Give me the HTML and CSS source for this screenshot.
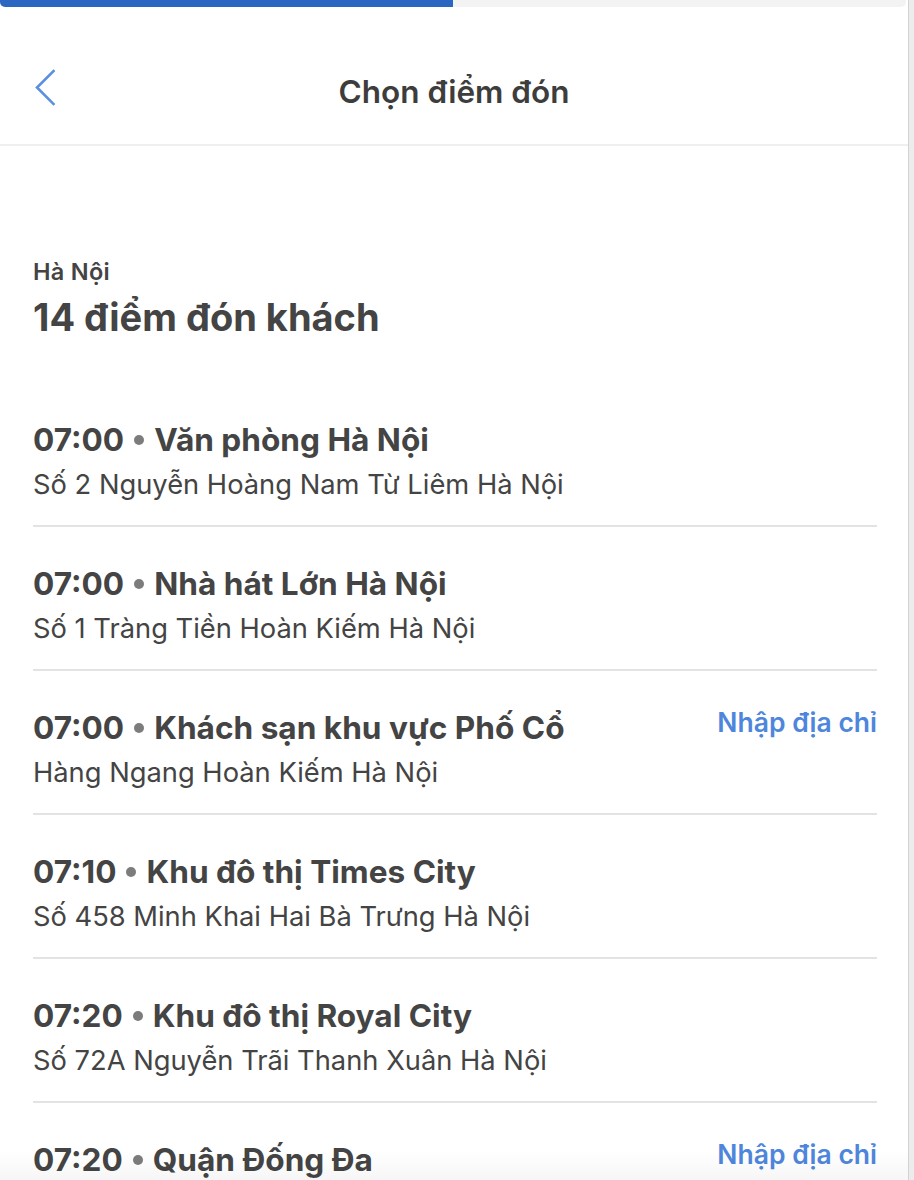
FILE: index.html
```html
<!DOCTYPE html>
<html lang="vi">
<head>
<meta charset="utf-8">
<title>Chọn điểm đón</title>
<link rel="stylesheet" href="styles.css">
</head>
<body>
<div class="frame">
  <div class="page">
    <div class="progress"><div class="progress-fill" style="width:50%"></div></div>
    <header class="topbar">
      <button class="back" aria-label="Quay lại">
        <svg width="24" height="38" viewBox="0 0 24 38"><polyline points="19.5,2 3,18.5 19.5,35" fill="none" stroke="#5b8fe1" stroke-width="2.6" stroke-linecap="square" stroke-linejoin="miter"/></svg>
      </button>
      <h1 class="title">Chọn điểm đón</h1>
    </header>
    <main class="content">
      <div class="city">Hà Nội</div>
      <div class="count">14 điểm đón khách</div>
      <ul class="list">
        <li class="item">
          <div class="row"><span class="name">07:00<i class="dot"></i>Văn phòng Hà Nội</span></div>
          <div class="addr">Số 2 Nguyễn Hoàng Nam Từ Liêm Hà Nội</div>
        </li>
        <li class="item">
          <div class="row"><span class="name">07:00<i class="dot"></i>Nhà hát Lớn Hà Nội</span></div>
          <div class="addr">Số 1 Tràng Tiền Hoàn Kiếm Hà Nội</div>
        </li>
        <li class="item">
          <div class="row"><span class="name">07:00<i class="dot"></i>Khách sạn khu vực Phố Cổ</span><a class="enter">Nhập địa chỉ</a></div>
          <div class="addr">Hàng Ngang Hoàn Kiếm Hà Nội</div>
        </li>
        <li class="item">
          <div class="row"><span class="name">07:10<i class="dot"></i>Khu đô thị Times City</span></div>
          <div class="addr">Số 458 Minh Khai Hai Bà Trưng Hà Nội</div>
        </li>
        <li class="item">
          <div class="row"><span class="name">07:20<i class="dot"></i>Khu đô thị Royal City</span></div>
          <div class="addr">Số 72A Nguyễn Trãi Thanh Xuân Hà Nội</div>
        </li>
        <li class="item">
          <div class="row"><span class="name">07:20<i class="dot"></i>Quận Đống Đa</span><a class="enter">Nhập địa chỉ</a></div>
          <div class="addr">Đống Đa Hà Nội</div>
        </li>
      </ul>
    </main>
    <div class="fade"></div>
  </div>
  <div class="scrollbar"></div>
</div>
</body>
</html>
```

FILE: styles.css
```css
html, body {
  margin: 0;
  padding: 0;
  height: 100%;
  overflow: hidden;
  background: #fff;
}
body {
  font-family: Inter, "Noto Sans", Roboto, sans-serif;
  color: #444;
}
.frame {
  display: flex;
  height: 1180px;
}
.page {
  position: relative;
  flex: 1;
  min-width: 0;
  overflow: hidden;
}
.scrollbar {
  width: 5px;
  border-left: 1px solid #d2d2d2;
  background: #ececec;
}
.progress {
  height: 7px;
  margin-right: 2px;
  background: #f3f3f3;
  border-radius: 0 0 5px 5px;
  overflow: hidden;
}
.progress-fill {
  height: 100%;
  background: #2c66c3;
}
.topbar {
  position: relative;
  height: 137px;
  border-bottom: 2px solid #efefef;
  display: flex;
  align-items: center;
  justify-content: center;
}
.back {
  position: absolute;
  left: 34px;
  top: 62px;
  padding: 0;
  border: 0;
  background: none;
  display: flex;
}
.title {
  margin: 0;
  font-size: 31.5px;
  font-weight: 600;
  color: #3d3d3d;
  letter-spacing: 0;
  padding-top: 32px;
  line-height: 40px;
}
.content {
  padding: 113px 31px 0 33px;
}
.city {
  font-size: 23.5px;
  font-weight: 600;
  line-height: 26px;
  color: #444;
  letter-spacing: 0.3px;
}
.count {
  margin-top: 10px;
  font-size: 38px;
  font-weight: 700;
  line-height: 44px;
  color: #444;
}
.list {
  list-style: none;
  margin: 44px 0 0;
  padding: 0;
}
.item {
  padding: 35px 0 22px;
  border-bottom: 2px solid #e3e3e3;
}
.row {
  display: flex;
  align-items: flex-start;
  justify-content: space-between;
}
.name {
  font-size: 31.6px;
  font-weight: 700;
  line-height: 44px;
  color: #444;
}
.dot {
  display: inline-block;
  width: 10px;
  height: 10px;
  border-radius: 50%;
  background: #7c7c7c;
  vertical-align: middle;
  margin: -4px 10px 0 10px;
}
.enter {
  font-size: 26.5px;
  font-weight: 600;
  line-height: 32px;
  color: #4e86dc;
  cursor: pointer;
}
.addr {
  margin-top: 5px;
  font-size: 27.3px;
  line-height: 36px;
  color: #444;
}
.fade {
  position: absolute;
  left: 0;
  right: 0;
  bottom: 0;
  height: 30px;
  background: linear-gradient(rgba(0,0,0,0), rgba(0,0,0,0.035));
}
```
